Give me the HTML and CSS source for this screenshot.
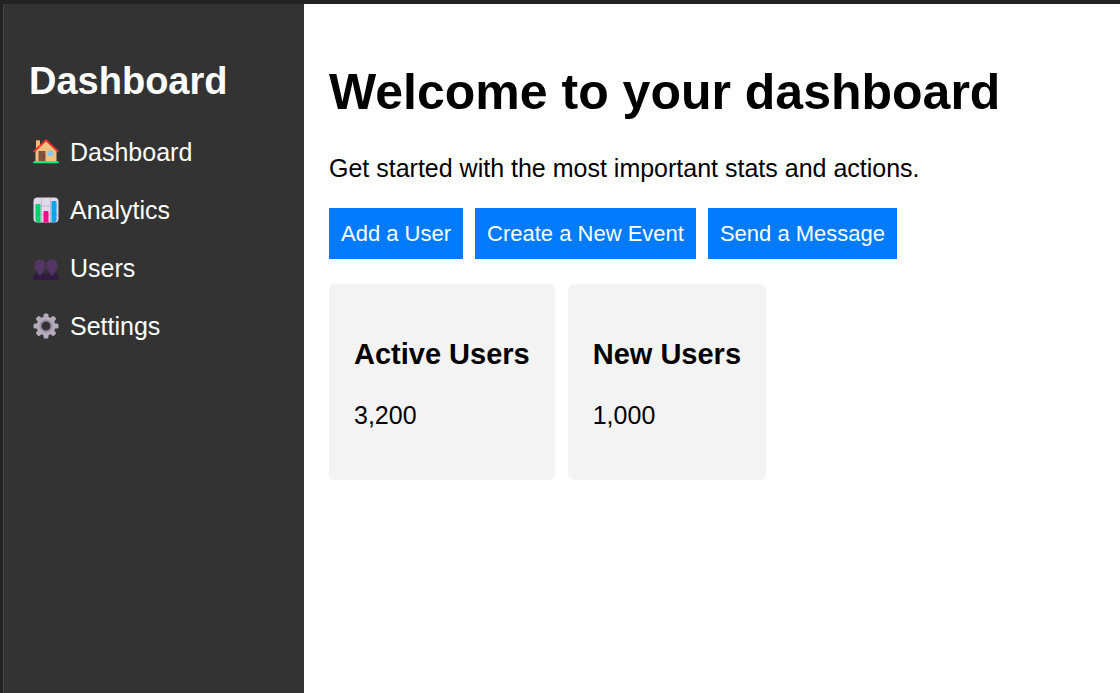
FILE: index.html
```html
<!DOCTYPE html>
<html lang="en">
<head>
<meta charset="utf-8">
<meta name="viewport" content="width=device-width, initial-scale=1">
<title>Dashboard</title>
<link rel="stylesheet" href="styles.css">
</head>
<body>
<div class="layout">
  <aside class="sidebar">
    <h2 class="brand">Dashboard</h2>
    <nav>
      <ul class="menu">
        <li><a class="menu-link" href="#dashboard">
          <svg class="icon" viewBox="0 0 26 26" aria-hidden="true">
            <path fill="#f3b96c" d="M3 1h4v8H3z"/><path fill="#c28d4c" d="M3 1h4v1H3z"/>
            <path fill="#f3c17f" d="M13 2 2.500 12v11h21V12z"/>
            <path fill="#80533f" d="M5.500 12h7v10.500h-7z"/><circle cx="11" cy="17.500" r=".7" fill="#5c3a2c"/>
            <path fill="#83c8ff" d="M14.500 12h5.500v5h-5.500z"/>
            <path fill="none" stroke="#f8312f" stroke-width="1.800" stroke-linecap="round" stroke-linejoin="round" d="M1 12.500 13 1.200l12 11.300"/>
            <rect x="0" y="22.300" width="26" height="2" rx="1" fill="#00f27a"/>
          </svg>
          <span>Dashboard</span></a></li>
        <li><a class="menu-link" href="#analytics">
          <svg class="icon" viewBox="0 0 26 26" aria-hidden="true">
            <rect x=".5" y=".5" width="25" height="25" rx="4" fill="#e1d8ec"/>
            <path fill="none" stroke="#bdb3c8" stroke-width=".8" d="M1 9h24M1 18h24M8.500 1v24M17.500 1v24"/>
            <path fill="#00d26a" d="M2.500 8q0-1 1-1h3q1 0 1 1v17h-3q-2 0-2-2z"/>
            <path fill="#f70a8d" d="M10.500 15q0-1 1-1h3q1 0 1 1v10.500h-5z"/>
            <path fill="#00a6ed" d="M18.500 5q0-1 1-1h3q1 0 1 1v18q0 2-2 2h-3z"/>
          </svg>
          <span>Analytics</span></a></li>
        <li><a class="menu-link" href="#users">
          <svg class="icon" viewBox="0 0 26 26" aria-hidden="true">
            <path fill="#321b41" d="M0 25v-2q0-4.500 5-4.500h16q5 0 5 4.500v2z"/>
            <path fill="#533566" d="M7 4.500c4 0 5.500 2.500 5.300 6 1 1 .3 3.500-1 3.500-.5 2-1.500 3.200-2.500 4v1.500q-1.800 1.500-3.600 0V18c-1-.8-2-2-2.500-4-1.300 0-2-2.500-1-3.500-.2-3.500 1.300-6 5.300-6z"/>
            <path fill="#533566" d="M19 4.500c4 0 5.500 2.500 5.300 6 1 1 .3 3.500-1 3.500-.5 2-1.500 3.200-2.500 4v1.500q-1.800 1.500-3.600 0V18c-1-.8-2-2-2.500-4-1.300 0-2-2.500-1-3.500-.2-3.500 1.300-6 5.300-6z"/>
          </svg>
          <span>Users</span></a></li>
        <li><a class="menu-link" href="#settings">
          <svg class="icon" viewBox="0 0 26 26" aria-hidden="true">
            <g fill="#b4acbc">
              <rect x="10.500" y=".5" width="5" height="25" rx="1.500"/>
              <rect x="10.500" y=".5" width="5" height="25" rx="1.500" transform="rotate(45 13 13)"/>
              <rect x="10.500" y=".5" width="5" height="25" rx="1.500" transform="rotate(90 13 13)"/>
              <rect x="10.500" y=".5" width="5" height="25" rx="1.500" transform="rotate(135 13 13)"/>
              <circle cx="13" cy="13" r="9.500"/>
            </g>
            <circle cx="13" cy="13" r="5.500" fill="#333" stroke="#998ea4" stroke-width="2"/>
          </svg>
          <span>Settings</span></a></li>
      </ul>
    </nav>
  </aside>
  <main class="content">
    <h1 class="title">Welcome to your dashboard</h1>
    <p class="intro">Get started with the most important stats and actions.</p>
    <div class="actions">
      <button class="action" type="button">Add a User</button>
      <button class="action" type="button">Create a New Event</button>
      <button class="action" type="button">Send a Message</button>
    </div>
    <div class="stats">
      <section class="card"><h3 class="card-title">Active Users</h3><p class="card-value">3,200</p></section>
      <section class="card"><h3 class="card-title">New Users</h3><p class="card-value">1,000</p></section>
    </div>
  </main>
</div>
</body>
</html>
```
FILE: styles.css
```css
* { box-sizing: border-box; }
body {
  margin: 0;
  font-family: "Liberation Sans", Arial, sans-serif;
  font-size: 25px;
  line-height: 28px;
  color: #000;
  background: #fff;
}
h1, h2, h3, p, ul { margin: 0; padding: 0; }
.layout {
  display: flex;
  min-height: 100vh;
  border-top: 4px solid #222;
  border-left: 3px solid #222;
}
.sidebar {
  flex: 0 0 301px;
  padding: 56px 25px 25px;
  color: #fff;
  background: #333;
  border-left: 1px solid #444;
}
.brand { font-size: 38px; line-height: 42px; }
.menu { list-style: none; margin-top: 21px; }
.menu-link {
  display: flex;
  align-items: center;
  gap: 11px;
  padding: 15px 4px;
  color: #fff;
  text-decoration: none;
}
.icon { width: 26px; height: 26px; flex: none; }
.content { flex: 1; min-width: 0; padding: 59px 25px 25px; }
.title { font-size: 50px; line-height: 58px; }
.intro { margin-top: 33px; }
.actions { display: flex; flex-wrap: wrap; gap: 12px; margin-top: 26px; }
.action {
  padding: 12px;
  border: 0;
  color: #fff;
  background: #007bff;
  font: 22px/27px "Liberation Sans", Arial, sans-serif;
  cursor: pointer;
}
.stats { display: flex; flex-wrap: wrap; gap: 13px; margin-top: 25px; }
.card {
  padding: 54px 25px 51px;
  background: #f3f3f3;
  border-radius: 6px;
}
.card-title { font-size: 29px; line-height: 33px; }
.card-value { margin-top: 30px; }
```
